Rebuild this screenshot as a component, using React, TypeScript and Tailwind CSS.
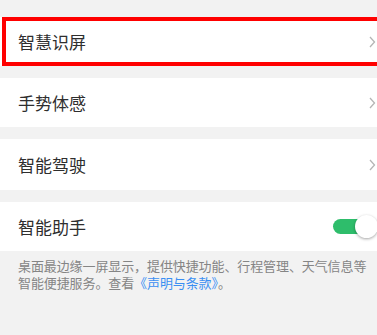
import React from "react";

const Chevron = () => (
  <svg width="7" height="12" viewBox="0 0 7 12" className="shrink-0">
    <path d="M1 1 L5.5 6 L1 11" fill="none" stroke="#b5b5b5" strokeWidth="1.3" />
  </svg>
);

const Row = ({ label, h, children }: { label: string; h: string; children?: React.ReactNode }) => (
  <div className={`relative flex items-center justify-between bg-white pl-[18px] pr-[1px] ${h}`}>
    <span className="text-[17px] leading-none text-[#2e2e2e]">{label}</span>
    {children}
  </div>
);

const Toggle = () => (
  <div className="relative -mr-[2px] flex h-[23px] w-[45px] items-center">
    <div className="h-[15px] w-[40px] rounded-full bg-[#2ebd6b]" />
    <div className="absolute right-0 top-0 h-[23px] w-[23px] rounded-full bg-white shadow-[0_1px_3px_rgba(0,0,0,0.35)]" />
  </div>
);

export default function App() {
  return (
    <div
      className="flex h-[335px] w-[377px] flex-col overflow-hidden bg-[#f2f2f2] pt-[17px]"
      style={{ fontFamily: '"Noto Sans CJK SC", "Noto Sans", sans-serif' }}
    >
      <div className="flex flex-col gap-[12px]">
        <Row label="智慧识屏" h="h-[49px]">
          <Chevron />
          <div className="absolute top-0 bottom-0 left-[2px] -right-4 border-[4px] border-[#ff0000]" />
        </Row>
        <Row label="手势体感" h="h-[49px]">
          <Chevron />
        </Row>
        <Row label="智能驾驶" h="h-[51px]">
          <Chevron />
        </Row>
        <Row label="智能助手" h="h-[49px]">
          <Toggle />
        </Row>
      </div>
      <div className="flex flex-col px-[18px] pt-[6px] text-[13px] leading-[17px] text-[#858585] tracking-[-0.1px]">
        <p className="whitespace-nowrap">桌面最边缘一屏显示，提供快捷功能、行程管理、天气信息等</p>
        <p className="whitespace-nowrap">
          智能便捷服务。查看<span className="text-[#3b8ff2]">《声明与条款》</span>。
        </p>
      </div>
    </div>
  );
}
